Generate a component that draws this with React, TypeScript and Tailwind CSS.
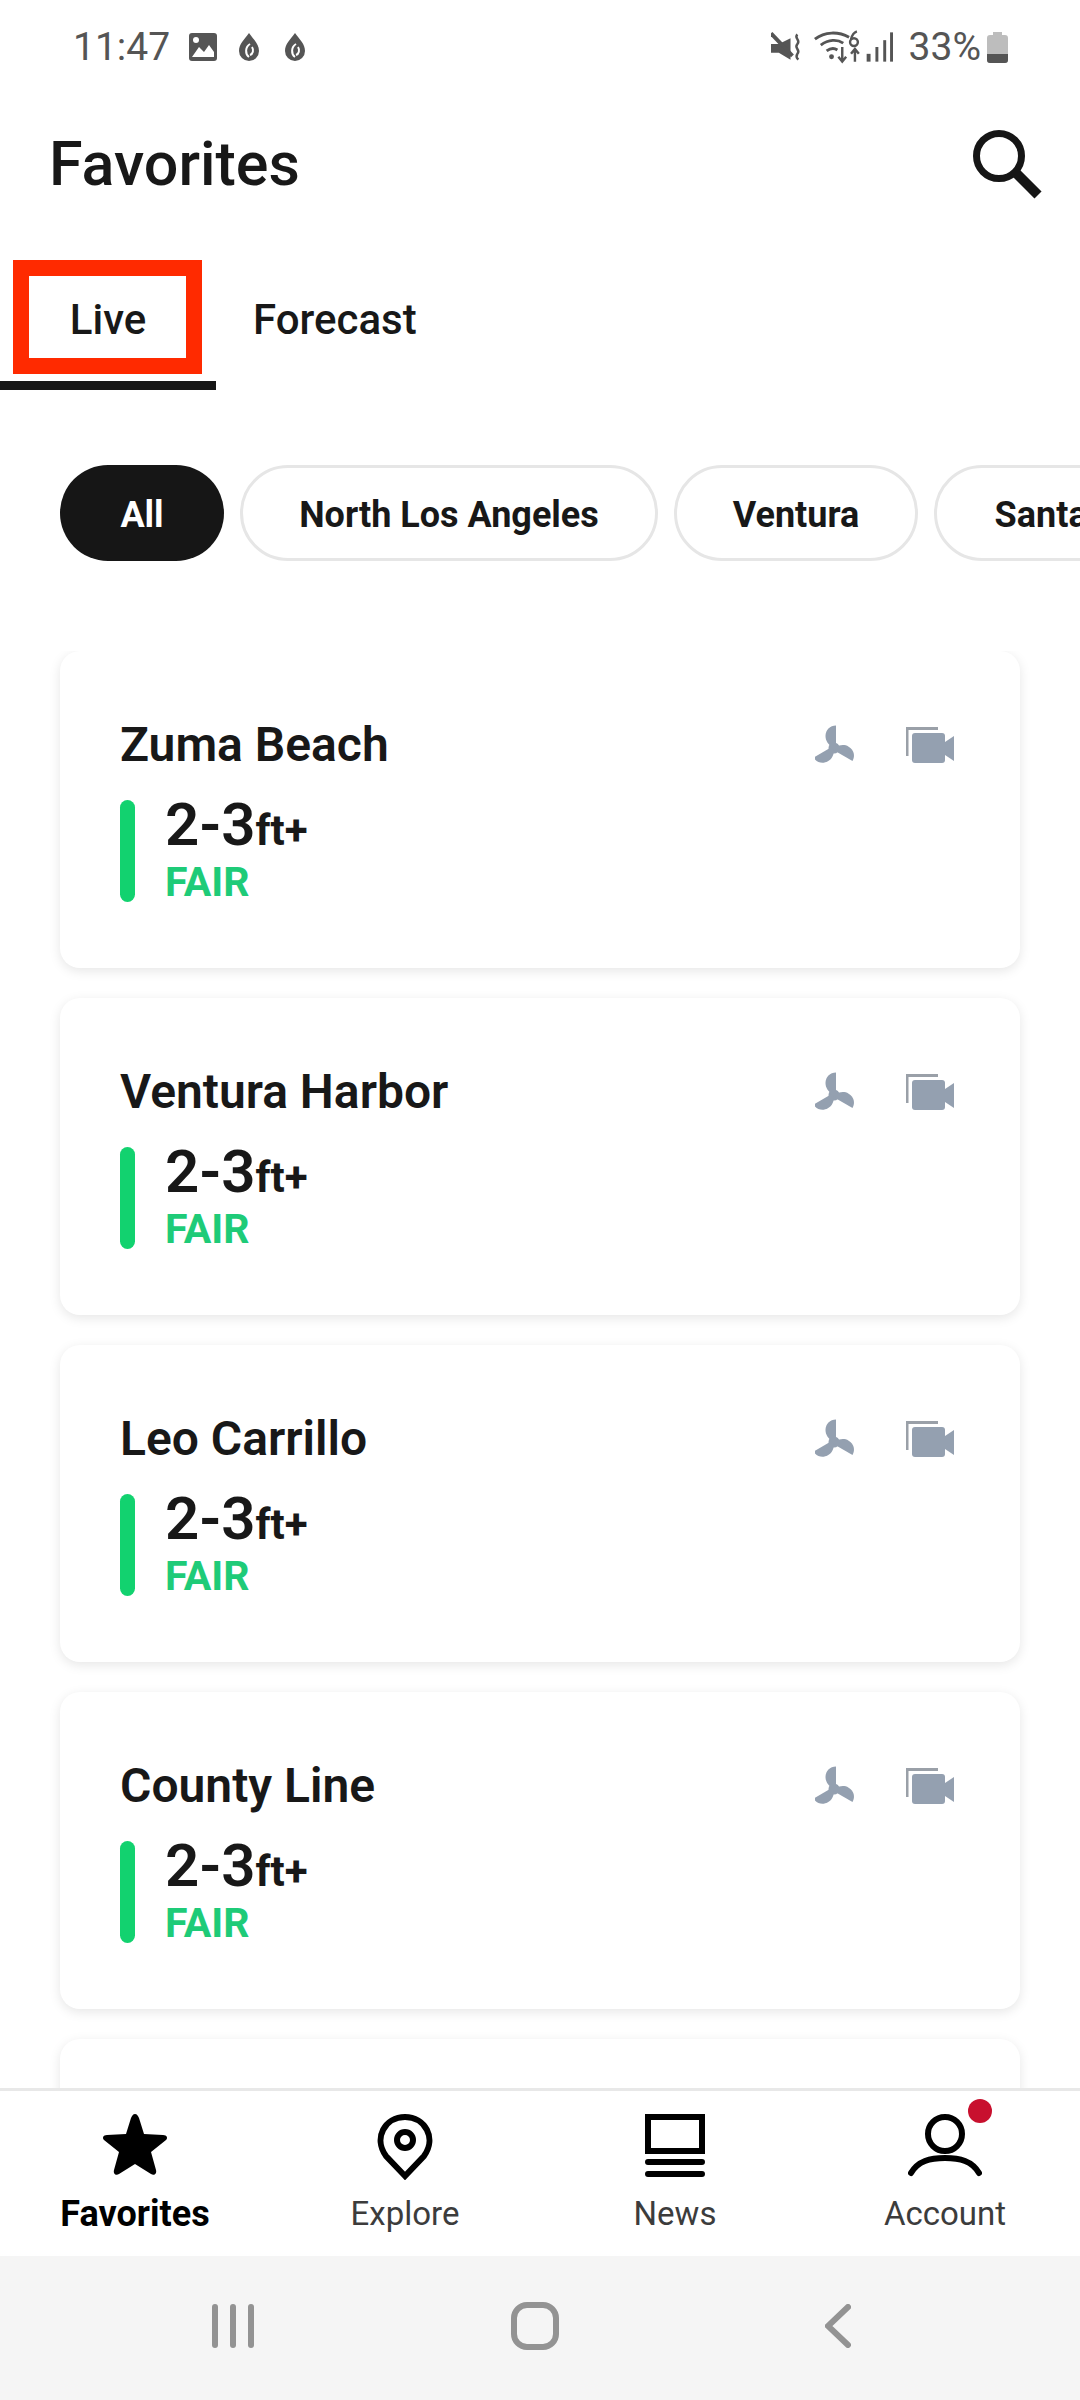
const spots = ['Zuma Beach', 'Ventura Harbor', 'Leo Carrillo', 'County Line', ''];

const filters = [
  { label: 'North Los Angeles', width: 'w-[418px]' },
  { label: 'Ventura', width: 'w-[244px]' },
  { label: 'Santa Barbara', width: 'w-[350px]' },
];

const bladePath = 'M21 21V0.500C15 0.500 10.500 5 10.500 11C10.500 16 13.500 19.500 17 22Z';

function FanIcon() {
  return (
    <svg width="42" height="40" viewBox="0 0 42 40" fill="#94a0b0">
      <circle cx="19" cy="23" r="5.500" />
      <path d={bladePath} />
      <path d={bladePath} transform="rotate(120 19 23)" />
      <path d={bladePath} transform="rotate(240 19 23)" />
    </svg>
  );
}

function CameraIcon() {
  return (
    <svg width="49" height="37" viewBox="0 0 49 37" fill="#94a0b0">
      <path d="M1 29V1.500H32" fill="none" stroke="#9aa0a8" strokeWidth="3" />
      <rect x="6" y="6" width="33" height="30" rx="3" />
      <path d="M39 15L48 9V34L39 28Z" />
    </svg>
  );
}

function SpotCard({ name }: { name: string }) {
  return (
    <div className="shrink-0 h-[317px] rounded-[20px] bg-white pl-[60px] pr-[65px] pt-[69px] shadow-[0_3px_12px_rgba(0,0,0,0.10)]">
      {name && (
        <>
          <div className="flex h-[50px] items-center justify-between">
            <span className="text-[48px] font-semibold leading-[50px] text-[#181818]">{name}</span>
            <div className="flex items-center gap-[49px]">
              <FanIcon />
              <CameraIcon />
            </div>
          </div>
          <div className="mt-[30px] flex gap-[30px]">
            <div className="h-[102px] w-[15px] rounded-full bg-[#12d26f]" />
            <div className="-mt-[5px]">
              <div className="h-[60px] font-semibold leading-[60px] text-[#181818]">
                <span className="text-[60px]">2-3</span>
                <span className="text-[42px] font-bold">ft+</span>
              </div>
              <div className="mt-[5px] text-[41px] font-bold leading-[44px] text-[#1ecb78]">FAIR</div>
            </div>
          </div>
        </>
      )}
    </div>
  );
}

function NavItem({ label, active, children }: { label: string; active?: boolean; children: React.ReactNode }) {
  return (
    <div className="flex flex-1 flex-col items-center pt-[23px]">
      <div className="relative flex h-[66px] items-start justify-center">{children}</div>
      <span className={`mt-[15px] leading-[38px] ${active ? 'text-[36px] font-bold text-black' : 'text-[33px] text-[#3c3c3c]'}`}>
        {label}
      </span>
    </div>
  );
}

export default function App() {
  return (
    <div className="relative flex h-[2400px] w-[1080px] flex-col overflow-hidden bg-white font-['Roboto',sans-serif]">
      {/* status bar */}
      <div className="flex h-[100px] shrink-0 items-start justify-between pl-[73px] pr-[72px] pt-[24px] text-[#555555]">
        <div className="flex items-center gap-[19px]">
          <span className="text-[39px] leading-[46px]">11:47</span>
          <svg width="116" height="30" viewBox="0 0 116 30" fill="#555555">
            <rect x="0" y="1" width="28" height="28" rx="3" />
            <circle cx="7" cy="8" r="3" fill="#fff" />
            <path d="M3 25L10 15L15 20L20 13L25 20V25Z" fill="#fff" />
            <path d="M60 1C55 8 50 12 50 19A10 10 0 0 0 70 19C70 12 65 8 60 1Z" />
            <path d="M61 12C56 15 56 22 60 25M63 15C65 18 64 22 61 23" fill="none" stroke="#fff" strokeWidth="2" />
            <path d="M106 1C101 8 96 12 96 19A10 10 0 0 0 116 19C116 12 111 8 106 1Z" />
            <path d="M107 12C102 15 102 22 106 25M109 15C111 18 110 22 107 23" fill="none" stroke="#fff" strokeWidth="2" />
          </svg>
        </div>
        <div className="flex items-center">
          <svg width="122" height="34" viewBox="0 0 125 34" fill="#555555" className="mr-[16px]">
            <path d="M0 14H8L20 8V30L8 23H0Z" />
            <path d="M0 3L22 26" stroke="#555555" strokeWidth="4" />
            <path d="M27 4C23 8 31 10 27 14C23 18 31 20 27 24C25 27 27 29 28 30" fill="none" stroke="#555555" strokeWidth="2.500" />
            <path d="M45 9C55 1 69 1 80 7M51 15C59 9 68 9 74 13M57 21C61 18 65 18 68 20" fill="none" stroke="#555555" strokeWidth="3" />
            <circle cx="62" cy="27" r="2.500" />
            <path d="M73 17V31M69 27L73 32L77 27M86 32V20M82 24L86 19L90 24" fill="none" stroke="#555555" strokeWidth="2.500" />
            <circle cx="85" cy="12" r="4" fill="none" stroke="#555555" strokeWidth="2.500" />
            <path d="M88 1C85 2 83 5 82 9" fill="none" stroke="#555555" strokeWidth="2.500" />
            <rect x="98" y="24" width="4" height="8" />
            <rect x="107" y="17" width="3" height="15" />
            <rect x="115" y="10" width="3" height="22" />
            <rect x="122" y="2" width="3" height="30" />
          </svg>
          <span className="mr-[6px] text-[39px] leading-[46px]">33%</span>
          <svg width="21" height="31" viewBox="0 0 21 31">
            <path d="M6 0H15V3H18A3 3 0 0 1 21 6V28A3 3 0 0 1 18 31H3A3 3 0 0 1 0 28V6A3 3 0 0 1 3 3H6Z" fill="#bdbdbd" />
            <path d="M0 22H21V28A3 3 0 0 1 18 31H3A3 3 0 0 1 0 28Z" fill="#555555" />
          </svg>
        </div>
      </div>

      {/* header */}
      <div className="flex h-[128px] shrink-0 items-center justify-between pl-[49px] pr-[38px]">
        <h1 className="text-[61px] font-medium leading-[66px] text-[#181818]">Favorites</h1>
        <svg width="69" height="69" viewBox="0 0 69 69" fill="none" stroke="#161616">
          <circle cx="26" cy="26" r="22.500" strokeWidth="7" />
          <path d="M43 43L65 65" strokeWidth="10" />
        </svg>
      </div>

      {/* tabs */}
      <div className="flex h-[162px] shrink-0">
        <div className="flex w-[216px] items-start justify-center border-b-[9px] border-[#161616] pt-[68px]">
          <span className="text-[42px] font-medium leading-[48px] text-[#181818]">Live</span>
        </div>
        <div className="pl-[37px] pt-[68px]">
          <span className="text-[42px] font-medium leading-[48px] text-[#181818]">Forecast</span>
        </div>
      </div>

      {/* annotation box drawn over the tab */}
      <div className="absolute left-[13px] top-[260px] h-[114px] w-[189px] border-[16px] border-[#ff2a00]" />

      {/* region filters */}
      <div className="mt-[75px] flex h-[96px] shrink-0 gap-[16px] overflow-hidden pl-[60px]">
        <div className="flex w-[164px] shrink-0 items-center justify-center rounded-full bg-[#161616] pt-[3px] text-[36px] font-bold text-white">
          All
        </div>
        {filters.map((f) => (
          <div
            key={f.label}
            className={`flex shrink-0 items-center justify-center rounded-full border-[3px] border-[#e6e6e6] pt-[3px] text-[36px] font-bold text-[#181818] ${f.width}`}
          >
            {f.label}
          </div>
        ))}
      </div>

      {/* spot cards */}
      <div className="mt-[90px] flex min-h-0 flex-1 flex-col gap-[30px] overflow-hidden px-[60px]">
        {spots.map((s, i) => (
          <SpotCard key={i} name={s} />
        ))}
      </div>

      {/* bottom nav */}
      <div className="relative flex h-[168px] shrink-0 border-t-[3px] border-[#e8e8e8] bg-white">
        <NavItem label="Favorites" active>
          <svg width="66" height="62" viewBox="0 0 66 62" fill="#000">
            <path d="M33 0C35 0 36 2 37 4L42 20L61 21C65 21 66 24 64 26L49 38L54 56C55 60 52 62 49 60L33 50L17 60C14 62 11 60 12 56L17 38L2 26C0 24 1 21 5 21L24 20L29 4C30 2 31 0 33 0Z" />
          </svg>
        </NavItem>
        <NavItem label="Explore">
          <svg width="56" height="66" viewBox="0 0 56 66" fill="none" stroke="#000" strokeWidth="6">
            <path d="M28 62L9 42C-4 24 8 3 28 3C48 3 60 24 47 42Z" />
            <circle cx="28" cy="26" r="8" />
          </svg>
        </NavItem>
        <NavItem label="News">
          <svg width="60" height="64" viewBox="0 0 60 64" fill="none" stroke="#000" strokeWidth="6">
            <rect x="3" y="3" width="54" height="34" />
            <path d="M3 48H57M3 60H57" strokeLinecap="round" />
          </svg>
        </NavItem>
        <NavItem label="Account">
          <svg width="74" height="64" viewBox="0 0 74 64" fill="none" stroke="#000" strokeWidth="6">
            <circle cx="37" cy="20" r="17" />
            <path d="M3 59C10 47 22 44 37 44C52 44 64 47 71 59" strokeLinecap="round" />
          </svg>
          <span className="absolute left-[60px] top-[-15px] h-[24px] w-[24px] rounded-full bg-[#c8102e]" />
        </NavItem>
      </div>

      {/* android nav */}
      <div className="flex h-[144px] shrink-0 items-center bg-[#f5f5f5] pb-[5px] pl-[212px]">
        <svg width="42" height="44" viewBox="0 0 42 44" fill="#939393">
          <rect x="0" y="0" width="6" height="44" rx="3" />
          <rect x="18" y="0" width="6" height="44" rx="3" />
          <rect x="36" y="0" width="6" height="44" rx="3" />
        </svg>
        <svg width="48" height="48" viewBox="0 0 48 48" fill="none" stroke="#939393" strokeWidth="6" className="ml-[257px]">
          <rect x="3" y="3" width="42" height="42" rx="13" />
        </svg>
        <svg width="26" height="44" viewBox="0 0 26 44" fill="none" stroke="#939393" strokeWidth="6" strokeLinecap="round" className="ml-[266px]">
          <path d="M23 3L3 22L23 41" />
        </svg>
      </div>
    </div>
  );
}
